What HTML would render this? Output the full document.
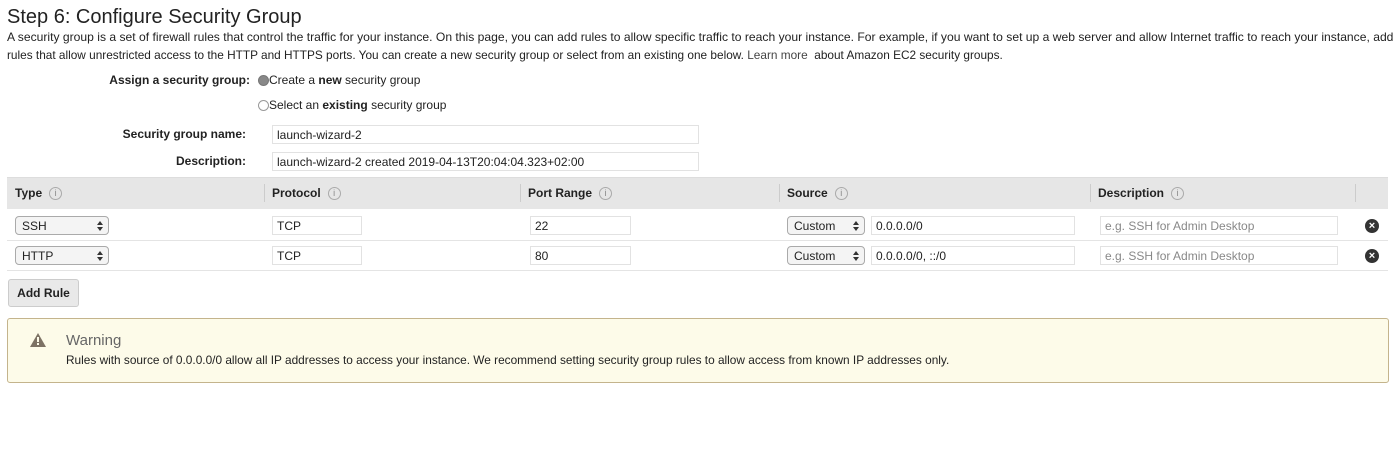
<!DOCTYPE html>
<html><head><meta charset="utf-8"><style>
*{box-sizing:border-box;margin:0;padding:0}
body{width:1400px;height:476px;background:#fff;font-family:"Liberation Sans",Arial,sans-serif;color:#222;font-size:12px;position:relative;overflow:hidden}
.a{position:absolute;white-space:nowrap}
.n{transform-origin:0 50%;}
.lbl{font-weight:bold;text-align:right}
.inp{position:absolute;border:1px solid #e2e2e2;background:#fff;height:19px;padding:2px 4px;font-size:12px;line-height:14px;white-space:nowrap}
.sel{position:absolute;border:1px solid #aaa;border-radius:4px;background:#f4f4f4;height:19px;padding:2px 6px;font-size:12px;line-height:14px}
.sel:after{content:"";position:absolute;right:5px;top:4px;width:0;height:0;border-left:3px solid transparent;border-right:3px solid transparent;border-bottom:4px solid #333}
.sel:before{content:"";position:absolute;right:5px;top:10px;width:0;height:0;border-left:3px solid transparent;border-right:3px solid transparent;border-top:4px solid #333}
.hd{font-weight:bold;font-size:12px}
.i{display:inline-block;width:13px;height:13px;border:1px solid #aaa;border-radius:50%;font-size:9px;line-height:11px;text-align:center;color:#888;font-weight:normal;margin-left:7px;vertical-align:1px}
.sep{position:absolute;top:184px;width:1px;height:18px;background:#ccc}
.x{position:absolute;width:14px;height:14px;border-radius:50%;background:#333;color:#fff;font-size:11px;line-height:14px;text-align:center;font-weight:bold}
.rad{position:absolute;width:11px;height:11px;border:1px solid #999;border-radius:50%;background:#fff}
</style></head><body>
<div class="a" style="left:7px;top:6px;font-size:20px;color:#222">Step 6: Configure Security Group</div>
<div class="a n" style="left:7px;top:30px;transform:scaleX(1.01)">A security group is a set of firewall rules that control the traffic for your instance. On this page, you can add rules to allow specific traffic to reach your instance. For example, if you want to set up a web server and allow Internet traffic to reach your instance, add</div>
<div class="a n" style="left:7px;top:48px;transform:scaleX(0.985)">rules that allow unrestricted access to the HTTP and HTTPS ports. You can create a new security group or select from an existing one below. <span style="color:#444">Learn more</span>&nbsp; about Amazon EC2 security groups.</div>

<div class="a lbl" style="right:1150px;top:73px">Assign a security group:</div>
<div class="rad" style="left:258px;top:75px;background:#888;border-color:#777"></div>
<div class="a" style="left:269px;top:73px">Create a <b>new</b> security group</div>
<div class="rad" style="left:258px;top:100px"></div>
<div class="a" style="left:269px;top:98px">Select an <b>existing</b> security group</div>

<div class="a lbl" style="right:1154px;top:127px">Security group name:</div>
<div class="inp" style="left:272px;top:125px;width:427px">launch-wizard-2</div>
<div class="a lbl" style="right:1154px;top:154px">Description:</div>
<div class="inp" style="left:272px;top:152px;width:427px">launch-wizard-2 created 2019-04-13T20:04:04.323+02:00</div>

<div class="a" style="left:7px;top:177px;width:1381px;height:32px;background:#e6e6e6;border-top:1px solid #ddd"></div>
<div class="a hd" style="left:15px;top:186px">Type<span class="i">i</span></div>
<div class="sep" style="left:264px"></div>
<div class="a hd" style="left:272px;top:186px">Protocol<span class="i">i</span></div>
<div class="sep" style="left:520px"></div>
<div class="a hd" style="left:528px;top:186px">Port Range<span class="i">i</span></div>
<div class="sep" style="left:779px"></div>
<div class="a hd" style="left:787px;top:186px">Source<span class="i">i</span></div>
<div class="sep" style="left:1090px"></div>
<div class="a hd" style="left:1098px;top:186px">Description<span class="i">i</span></div>
<div class="sep" style="left:1355px"></div>

<div class="a" style="left:7px;top:240px;width:1381px;height:1px;background:#e4e4e4"></div>
<div class="a" style="left:7px;top:270px;width:1381px;height:1px;background:#e4e4e4"></div>

<div class="sel" style="left:15px;top:216px;width:94px">SSH</div>
<div class="inp" style="left:272px;top:216px;width:90px">TCP</div>
<div class="inp" style="left:530px;top:216px;width:101px">22</div>
<div class="sel" style="left:787px;top:216px;width:78px">Custom</div>
<div class="inp" style="left:871px;top:216px;width:204px">0.0.0.0/0</div>
<div class="inp" style="left:1100px;top:216px;width:238px;color:#888">e.g. SSH for Admin Desktop</div>
<div class="x" style="left:1365px;top:219px">×</div>

<div class="sel" style="left:15px;top:246px;width:94px">HTTP</div>
<div class="inp" style="left:272px;top:246px;width:90px">TCP</div>
<div class="inp" style="left:530px;top:246px;width:101px">80</div>
<div class="sel" style="left:787px;top:246px;width:78px">Custom</div>
<div class="inp" style="left:871px;top:246px;width:204px">0.0.0.0/0, ::/0</div>
<div class="inp" style="left:1100px;top:246px;width:238px;color:#888">e.g. SSH for Admin Desktop</div>
<div class="x" style="left:1365px;top:249px">×</div>

<div class="a" style="left:8px;top:279px;width:71px;height:28px;border:1px solid #ccc;border-radius:3px;background:#e9e9e9;font-weight:bold;text-align:center;line-height:26px">Add Rule</div>

<div class="a" style="left:7px;top:318px;width:1382px;height:65px;background:#fdfbe9;border:1px solid #c4b48c;border-radius:3px"></div>
<svg class="a" style="left:30px;top:333px" width="16" height="14" viewBox="0 0 16 14"><path d="M8 0L16 14H0Z" fill="#7d7264"/><rect x="7" y="4" width="2" height="5" fill="#fdfbe9"/><rect x="7" y="10" width="2" height="2" fill="#fdfbe9"/></svg>
<div class="a" style="left:66px;top:332px;font-size:15px;color:#666">Warning</div>
<div class="a n" style="left:66px;top:353px;transform:scaleX(0.987)">Rules with source of 0.0.0.0/0 allow all IP addresses to access your instance. We recommend setting security group rules to allow access from known IP addresses only.</div>
</body></html>
